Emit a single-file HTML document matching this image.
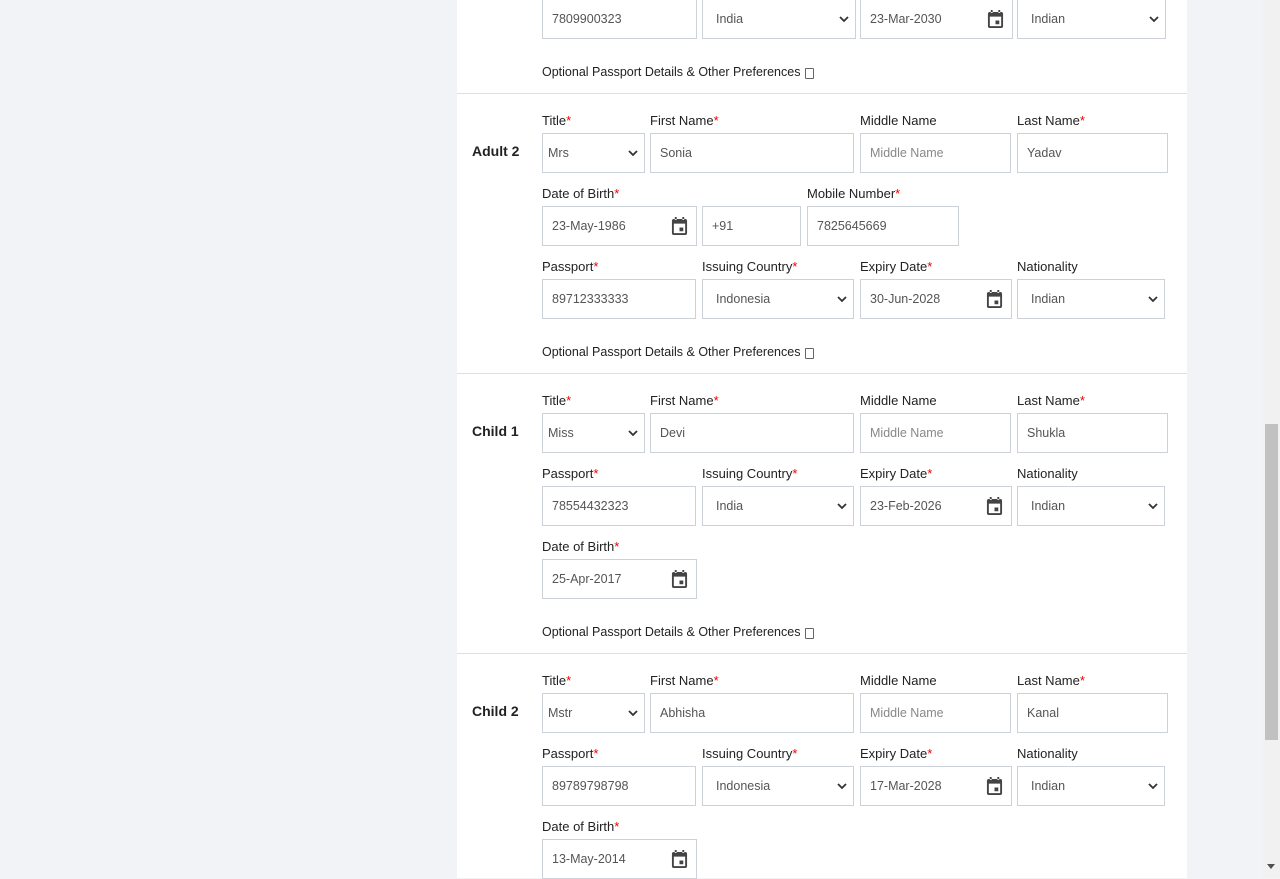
<!DOCTYPE html>
<html><head><meta charset="utf-8"><style>
body{margin:0;width:1280px;height:878px;background:#f2f3f7;font-family:"Liberation Sans",Arial,sans-serif;overflow:hidden;position:relative}
.p{position:absolute;left:457px;top:0;width:730px;height:878px;background:#fff}
.l{position:absolute;font-size:13px;color:#222;line-height:16px;white-space:nowrap;margin-top:1px}
.l i{color:#e00;font-style:normal}
.f{position:absolute;height:38px;border:1px solid #cdd1d8;box-sizing:content-box;font-size:12.5px;color:#555;line-height:38px;padding-left:9px;white-space:nowrap}
.f.s{padding-left:13px}
.f.ph{color:#888}
.cv{position:absolute;right:5px;top:15px}
.cal{position:absolute;right:8px;top:10px}
.h{position:absolute;left:472px;font-size:14px;font-weight:bold;color:#222;margin-top:1px}
.hr{position:absolute;left:457px;width:730px;height:1px;background:#dedfe3}
.o{position:absolute;left:542px;font-size:12.5px;color:#222;margin-top:1px}
.o b{display:inline-block;width:7px;height:9px;border:1px solid #666;margin-left:5px;vertical-align:-3px;border-radius:1px}
.sb{position:absolute;left:1263px;top:0;width:17px;height:878px;background:#f1f1f1}
.th{position:absolute;left:1265px;top:424px;width:13px;height:316px;background:#c1c1c1}
</style></head><body>
<div class="p"></div>
<svg width="0" height="0" style="position:absolute"><defs>
<symbol id="cv" viewBox="0 0 12 8"><path d="M2 2l4 4 4-4" fill="none" stroke="#333" stroke-width="1.8"/></symbol>
<symbol id="cal" viewBox="0 0 18 20"><path d="M3 2h12a2 2 0 0 1 2 2v13a2 2 0 0 1-2 2H3a2 2 0 0 1-2-2V4a2 2 0 0 1 2-2zM3 7v10h12V7z M9 11h4v4H9z M4 0h2v3H4z M12 0h2v3h-2z" fill="#444" fill-rule="evenodd"/></symbol>
</defs></svg>

<div class="f" style="left:542px;top:-1px;width:144px">7809900323</div>
<div class="f s" style="left:702px;top:-1px;width:139px">India<svg class="cv" width="12" height="8"><use href="#cv"/></svg></div>
<div class="f" style="left:860px;top:-1px;width:142px">23-Mar-2030<svg class="cal" width="17" height="19"><use href="#cal"/></svg></div>
<div class="f s" style="left:1017px;top:-1px;width:134px">Indian<svg class="cv" width="12" height="8"><use href="#cv"/></svg></div>
<div class="o" style="top:64px">Optional Passport Details &amp; Other Preferences<b></b></div>
<div class="hr" style="top:93px"></div>

<div class="h" style="top:142px">Adult 2</div>
<div class="l" style="left:542px;top:112px">Title<i>*</i></div>
<div class="l" style="left:650px;top:112px">First Name<i>*</i></div>
<div class="l" style="left:860px;top:112px">Middle Name</div>
<div class="l" style="left:1017px;top:112px">Last Name<i>*</i></div>
<div class="f" style="left:542px;top:133px;width:96px;padding-left:5px">Mrs<svg class="cv" width="12" height="8"><use href="#cv"/></svg></div>
<div class="f" style="left:650px;top:133px;width:193px">Sonia</div>
<div class="f ph" style="left:860px;top:133px;width:140px">Middle Name</div>
<div class="f" style="left:1017px;top:133px;width:140px">Yadav</div>
<div class="l" style="left:542px;top:185px">Date of Birth<i>*</i></div>
<div class="l" style="left:807px;top:185px">Mobile Number<i>*</i></div>
<div class="f" style="left:542px;top:206px;width:144px">23-May-1986<svg class="cal" width="17" height="19"><use href="#cal"/></svg></div>
<div class="f" style="left:702px;top:206px;width:88px">+91</div>
<div class="f" style="left:807px;top:206px;width:141px">7825645669</div>
<div class="l" style="left:542px;top:258px">Passport<i>*</i></div>
<div class="l" style="left:702px;top:258px">Issuing Country<i>*</i></div>
<div class="l" style="left:860px;top:258px">Expiry Date<i>*</i></div>
<div class="l" style="left:1017px;top:258px">Nationality</div>
<div class="f" style="left:542px;top:279px;width:143px">89712333333</div>
<div class="f s" style="left:702px;top:279px;width:137px">Indonesia<svg class="cv" width="12" height="8"><use href="#cv"/></svg></div>
<div class="f" style="left:860px;top:279px;width:141px">30-Jun-2028<svg class="cal" width="17" height="19"><use href="#cal"/></svg></div>
<div class="f s" style="left:1017px;top:279px;width:133px">Indian<svg class="cv" width="12" height="8"><use href="#cv"/></svg></div>
<div class="o" style="top:344px">Optional Passport Details &amp; Other Preferences<b></b></div>
<div class="hr" style="top:373px"></div>

<div class="h" style="top:422px">Child 1</div>
<div class="l" style="left:542px;top:392px">Title<i>*</i></div>
<div class="l" style="left:650px;top:392px">First Name<i>*</i></div>
<div class="l" style="left:860px;top:392px">Middle Name</div>
<div class="l" style="left:1017px;top:392px">Last Name<i>*</i></div>
<div class="f" style="left:542px;top:413px;width:96px;padding-left:5px">Miss<svg class="cv" width="12" height="8"><use href="#cv"/></svg></div>
<div class="f" style="left:650px;top:413px;width:193px">Devi</div>
<div class="f ph" style="left:860px;top:413px;width:140px">Middle Name</div>
<div class="f" style="left:1017px;top:413px;width:140px">Shukla</div>
<div class="l" style="left:542px;top:465px">Passport<i>*</i></div>
<div class="l" style="left:702px;top:465px">Issuing Country<i>*</i></div>
<div class="l" style="left:860px;top:465px">Expiry Date<i>*</i></div>
<div class="l" style="left:1017px;top:465px">Nationality</div>
<div class="f" style="left:542px;top:486px;width:143px">78554432323</div>
<div class="f s" style="left:702px;top:486px;width:137px">India<svg class="cv" width="12" height="8"><use href="#cv"/></svg></div>
<div class="f" style="left:860px;top:486px;width:141px">23-Feb-2026<svg class="cal" width="17" height="19"><use href="#cal"/></svg></div>
<div class="f s" style="left:1017px;top:486px;width:133px">Indian<svg class="cv" width="12" height="8"><use href="#cv"/></svg></div>
<div class="l" style="left:542px;top:538px">Date of Birth<i>*</i></div>
<div class="f" style="left:542px;top:559px;width:144px">25-Apr-2017<svg class="cal" width="17" height="19"><use href="#cal"/></svg></div>
<div class="o" style="top:624px">Optional Passport Details &amp; Other Preferences<b></b></div>
<div class="hr" style="top:653px"></div>

<div class="h" style="top:702px">Child 2</div>
<div class="l" style="left:542px;top:672px">Title<i>*</i></div>
<div class="l" style="left:650px;top:672px">First Name<i>*</i></div>
<div class="l" style="left:860px;top:672px">Middle Name</div>
<div class="l" style="left:1017px;top:672px">Last Name<i>*</i></div>
<div class="f" style="left:542px;top:693px;width:96px;padding-left:5px">Mstr<svg class="cv" width="12" height="8"><use href="#cv"/></svg></div>
<div class="f" style="left:650px;top:693px;width:193px">Abhisha</div>
<div class="f ph" style="left:860px;top:693px;width:140px">Middle Name</div>
<div class="f" style="left:1017px;top:693px;width:140px">Kanal</div>
<div class="l" style="left:542px;top:745px">Passport<i>*</i></div>
<div class="l" style="left:702px;top:745px">Issuing Country<i>*</i></div>
<div class="l" style="left:860px;top:745px">Expiry Date<i>*</i></div>
<div class="l" style="left:1017px;top:745px">Nationality</div>
<div class="f" style="left:542px;top:766px;width:143px">89789798798</div>
<div class="f s" style="left:702px;top:766px;width:137px">Indonesia<svg class="cv" width="12" height="8"><use href="#cv"/></svg></div>
<div class="f" style="left:860px;top:766px;width:141px">17-Mar-2028<svg class="cal" width="17" height="19"><use href="#cal"/></svg></div>
<div class="f s" style="left:1017px;top:766px;width:133px">Indian<svg class="cv" width="12" height="8"><use href="#cv"/></svg></div>
<div class="l" style="left:542px;top:818px">Date of Birth<i>*</i></div>
<div class="f" style="left:542px;top:839px;width:144px">13-May-2014<svg class="cal" width="17" height="19"><use href="#cal"/></svg></div>

<div class="sb"></div><div class="th"></div>
<svg style="position:absolute;left:1267px;top:864px" width="9" height="6"><path d="M0 0h8L4 5z" fill="#505050"/></svg>
</body></html>
